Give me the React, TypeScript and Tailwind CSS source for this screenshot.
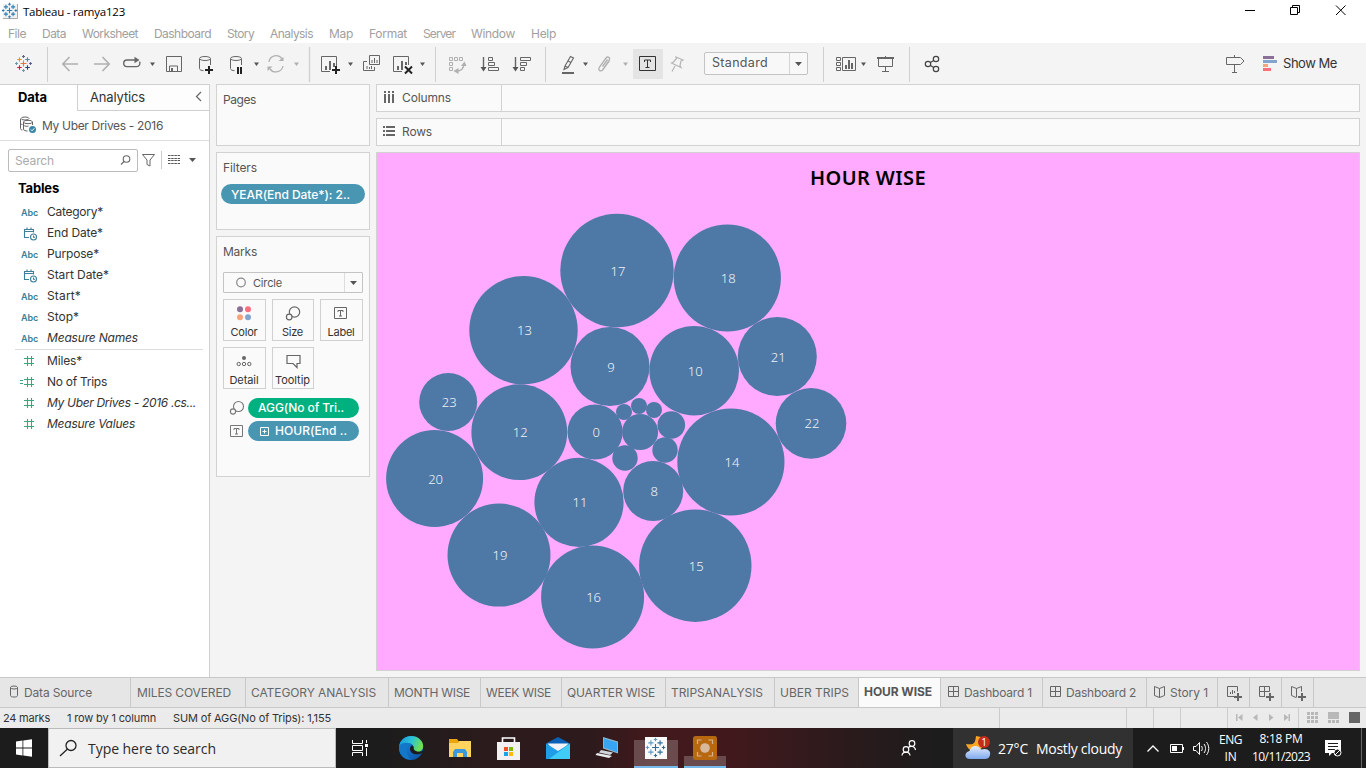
import React, { useLayoutEffect, useRef } from "react";
import clsx from "clsx";

/* Text run whose tracking is computed so that it fills a given width. */
function Fit({ w, className, children }: { w: number; className?: string; children: string }) {
  const ref = useRef<HTMLSpanElement>(null);
  useLayoutEffect(() => {
    const el = ref.current;
    if (!el) return;
    el.style.letterSpacing = "0px";
    const natural = el.getBoundingClientRect().width;
    el.style.letterSpacing = `${(w - natural) / children.length}px`;
  }, [w, children]);
  return (
    <span ref={ref} className={clsx("inline-block shrink-0 whitespace-pre", className)}>
      {children}
    </span>
  );
}

type IcProps = { x: number; y: number; w: number; h: number; c?: string; sw?: number; className?: string; children?: React.ReactNode };
/* Icon tile: the view box uses window coordinates. */
function Ic({ x, y, w, h, c = "#666", sw = 1, className, children }: IcProps) {
  return (
    <svg width={w} height={h} viewBox={`${x} ${y} ${w} ${h}`} fill="none" stroke={c} strokeWidth={sw} className={clsx("block shrink-0", className)}>
      {children}
    </svg>
  );
}
const Tool = ({ x, w, c, sw, children }: { x: number; w: number; c?: string; sw?: number; children?: React.ReactNode }) => (
  <Ic x={x} y={43} w={w} h={41} c={c} sw={sw}>
    {children}
  </Ic>
);
const Caret = ({ x, c = "#555" }: { x: number; c?: string }) => <path d={`M${x} 62.500h5l-2.500 3.500z`} fill={c} stroke="none" />;
const Sep = ({ x }: { x: number }) => <path d={`M${x}.5 47v35`} stroke="#cfcfcf" />;

const cross = (x: number, y: number, r: number, c: string, k: string | number) => (
  <path key={k} d={`M${x - r} ${y}h${2 * r}M${x} ${y - r}v${2 * r}`} stroke={c} />
);
function TableauMark({ cx, cy, s = 1, colors }: { cx: number; cy: number; s?: number; colors: string[] }) {
  const pts: [number, number, number][] = [
    [0, 0, 3], [-4, -4, 2.3], [4, -4, 2.3], [-4, 4, 2.3], [4, 4, 2.3], [0, -7, 1.5], [0, 7, 1.5], [-7, 0, 1.5], [7, 0, 1.5],
  ];
  return <g strokeWidth={1.1}>{pts.map(([dx, dy, r], i) => cross(cx + dx * s, cy + dy * s, r * s, colors[i % colors.length], i))}</g>;
}

const menus: [string, number, string][] = [
  ["File", 18, "ml-2"], ["Data", 24, "ml-4"], ["Worksheet", 56, "ml-4"], ["Dashboard", 57, "ml-4"], ["Story", 27, "ml-4"],
  ["Analysis", 43, "ml-4"], ["Map", 24, "ml-4"], ["Format", 38, "ml-4"], ["Server", 32, "ml-4"], ["Window", 44, "ml-4"], ["Help", 25, "ml-4"],
];

function TitleBar() {
  return (
    <div className="flex h-[23px] shrink-0 items-center bg-white">
      <Ic x={0} y={0} w={23} h={23} c="#3f86b0">
        <path d="M3 4h14v14H3z" fill="#f2f2f2" stroke="none" />
        <path d="M17.500 4v14.500H3" stroke="#aaa" />
        <TableauMark cx={9.5} cy={10.5} s={0.9} colors={["#2f7fb5"]} />
      </Ic>
      <Fit w={102} className="mt-px font-['Open_Sans',sans-serif] text-[11.500px] text-black">Tableau - ramya123</Fit>
      <Ic x={1230} y={0} w={136} h={23} c="#000" className="ml-auto">
        <path d="M1245 10.500h10" />
        <path d="M1290.500 7.500h7v7h-7zM1292.500 7.500v-2h7v7h-2" />
        <path d="M1336 5.500l9.500 9.500M1345.500 5.500L1336 15" />
      </Ic>
    </div>
  );
}

function MenuBar() {
  return (
    <div className="flex h-5 shrink-0 items-center bg-white pt-[2px] text-[12px] text-[#a0a0a0]">
      {menus.map(([t, w, m]) => (
        <Fit key={t} w={w} className={m}>{t}</Fit>
      ))}
    </div>
  );
}

function ToolBar() {
  return (
    <div className="flex h-[41px] shrink-0 items-center bg-[#f4f4f4]">
      <Tool x={0} w={56}>
        <TableauMark cx={23.5} cy={63.5} colors={["#e8762d", "#eb912c", "#5b879b", "#c72035", "#1f457e", "#5c6692", "#7199a6", "#7199a6", "#5c6692"]} />
        <Sep x={47} />
      </Tool>
      <Tool x={56} w={30} c="#b0b0b0" sw={1.6}><path d="M78 64H63M69.500 57L62.800 64l6.700 7" /></Tool>
      <Tool x={86} w={32} c="#b0b0b0" sw={1.6}><path d="M94 64h15M102.500 57l6.700 7-6.700 7" /></Tool>
      <Tool x={118} w={42} sw={1.4}>
        <path d="M135 60h-8a3.300 3.300 0 0 0 0 6.600h9.500a3.300 3.300 0 0 0 3-5" />
        <path d="M134.500 56.800l5 3.200-5 3.200z" fill="#666" stroke="none" />
        <Caret x={150} />
      </Tool>
      <Tool x={160} w={30}><path d="M166.500 56.500h15v15h-15zM169.500 71v-5h8v5" /><path d="M171 68h2v4h-2z" fill="#666" stroke="none" /></Tool>
      <Tool x={190} w={32}>
        <ellipse cx="205" cy="58.500" rx="5.500" ry="2" /><path d="M199.500 59v9.500c0 1.500 2 2 4 2.200M210.500 59v6" />
        <path d="M205 70h8M209 66v8" stroke="#222" strokeWidth={2} />
      </Tool>
      <Tool x={222} w={41}>
        <ellipse cx="236" cy="58.500" rx="5.500" ry="2" /><path d="M230.500 59v9.500c0 1.500 2 2 4 2.200M241.500 59v6" />
        <path d="M238 67v7M241 67v7" stroke="#222" strokeWidth={2} /><Caret x={254} />
      </Tool>
      <Tool x={263} w={50} c="#b0b0b0" sw={1.3}>
        <path d="M269 62a7.300 7.300 0 0 1 13-3.500M283 66a7.300 7.300 0 0 1-13 3" /><path d="M283.500 57v4h-5zM267.500 71v-4.500h5z" fill="#b0b0b0" stroke="none" />
        <Caret x={294} c="#b0b0b0" /><Sep x={309} />
      </Tool>
      <Tool x={313} w={44}>
        <path d="M330 71.500h-8.500v-15h15V66" /><path d="M326 66v4M330 61v9M334 63v4" strokeWidth={2} />
        <path d="M332 70h8M336 66v8" stroke="#222" strokeWidth={2} /><Caret x={348} />
      </Tool>
      <Tool x={357} w={30}>
        <path d="M369.500 55.500h10v9h-10zM367 61.500h-3.500v9h11v-3.500" /><path d="M372 60v3M374.500 58v5M377 60v3M367 66v3M369.500 67v2M371.500 66v3" />
      </Tool>
      <Tool x={387} w={54}>
        <path d="M402 71.500h-8.500v-15h15V65" /><path d="M398 66v4M402 61v9M406 62v3" strokeWidth={2} />
        <path d="M405 66.500l7 7M412 66.500l-7 7" stroke="#222" strokeWidth={2} /><Caret x={420} /><Sep x={435} />
      </Tool>
      <Tool x={441} w={33} c="#b0b0b0">
        <path d="M449.500 57.500h3v3h-3zM454.500 57.500h3v3h-3zM459.500 57.500h3v3h-3zM449.500 62.500h3v3h-3zM449.500 67.500h3v3h-3z" /><path d="M464 63.500c0 5-3 7.500-8 7.500" strokeWidth={1.3} />
        <path d="M461 66l3.500-4.500 2 4.500zM458.500 68v6l-5-3z" fill="#b0b0b0" stroke="none" />
      </Tool>
      <Tool x={474} w={32}>
        <path d="M483.500 57v12" strokeWidth={1.4} /><path d="M480.500 67h6l-3 4.500z" fill="#555" stroke="none" />
        <path d="M488.500 57.500h4v3h-4zM488.500 62.500h6v3h-6zM488.500 67.500h10v3h-10z" />
      </Tool>
      <Tool x={506} w={46}>
        <path d="M515.500 57v12" strokeWidth={1.4} /><path d="M512.500 67h6l-3 4.500z" fill="#555" stroke="none" />
        <path d="M520.500 57.500h10v3h-10zM520.500 62.500h6v3h-6zM520.500 67.500h4v3h-4z" /><Sep x={545} />
      </Tool>
      <Tool x={552} w={40}>
        <path d="M565 66l5.500-9.500 3 1.500-5.500 9.500-4 2zM565 66l3 1.500M568 61l3 1.500" strokeWidth={1.1} /><path d="M562 73h12" strokeWidth={2} /><Caret x={583} />
      </Tool>
      <Tool x={592} w={41} c="#b0b0b0" sw={1.3}>
        <path d="M602 70.500l7-10c1.800-3-1.200-4.500-3-2.500l-6.500 9c-2.200 4 1.500 5 3.500 2.500l6.500-9M602.500 66.500l5-7" /><Caret x={623} c="#b0b0b0" />
      </Tool>
      <div className="flex h-[30px] w-[30px] bg-[#e4e4e4]">
        <Ic x={633} y={49} w={30} h={30} c="#333"><path d="M639.500 56.500h16v14h-16zM644.500 62v-2h6v2M647.500 60v7.500M645.500 67.500h4" /></Ic>
      </div>
      <Tool x={663} w={41} c="#b5b5b5" sw={1.2}><path d="M676 57l7 3-2 1-1 4.500 1 2-9.500-4.500 2-1 3-3.500zM675 66l-3 5.500" /></Tool>
      <div className="flex h-[23px] w-[104px] items-center rounded-[2px] border border-[#c4c4c4] bg-[#f8f8f8] pl-[7px] text-[12.500px] text-[#555]">
        <Fit w={56}>Standard</Fit>
        <Ic x={789} y={53} w={18} h={21} className="ml-auto"><path d="M789.500 53v21" stroke="#d4d4d4" /><path d="M795 62h7l-3.500 4z" fill="#555" stroke="none" /></Ic>
      </div>
      <Tool x={808} w={64}>
        <Sep x={823} />
        <path d="M836.500 57.500h4v3h-4zM836.500 62.500h4v3h-4zM836.500 67.500h4v3h-4zM842.500 57.500h13v13h-13z" /><path d="M846 65v4M849 60v9M852 63v6" strokeWidth={2} /><Caret x={861} />
      </Tool>
      <Tool x={872} w={42}>
        <path d="M877 58h17" strokeWidth={2} /><path d="M878.500 58v8.500h14V58M885.500 56v2M885.500 67v4M882 71.500h7" /><Sep x={909} />
      </Tool>
      <Tool x={914} w={40} c="#444" sw={1.2}><circle cx="928" cy="64" r="2.700" /><circle cx="936" cy="59" r="2.700" /><circle cx="936" cy="69" r="2.700" /><path d="M930.500 62.500l3.200-2M930.500 65.500l3.200 2" /></Tool>
      <div className="flex-1" />
      <Tool x={1216} w={38}><path d="M1226.500 57.500h14l3.500 3.500-3.500 3.500h-14zM1234.500 55v2M1234.500 65v7M1232 72.500h5" /></Tool>
      <Tool x={1254} w={29}>
        <g stroke="none"><path d="M1263 56h11v3h-11z" fill="#8a6f96" /><path d="M1263 60h14v3h-14z" fill="#83a5cd" /><path d="M1263 64h5v3h-5z" fill="#f6a47c" /><path d="M1263 68h8v3h-8z" fill="#fa6f80" /></g>
      </Tool>
      <Fit w={54} className="mr-[29px] text-[13px] text-[#333]">Show Me</Fit>
    </div>
  );
}

type Field = { k: "abc" | "date" | "num" | "calc"; t: string; w: number; i?: boolean };
const dims: Field[] = [
  { k: "abc", t: "Category*", w: 56 }, { k: "date", t: "End Date*", w: 56 }, { k: "abc", t: "Purpose*", w: 52 }, { k: "date", t: "Start Date*", w: 62 },
  { k: "abc", t: "Start*", w: 34 }, { k: "abc", t: "Stop*", w: 32 }, { k: "abc", t: "Measure Names", w: 91, i: true },
];
const meas: Field[] = [
  { k: "num", t: "Miles*", w: 35 }, { k: "calc", t: "No of Trips", w: 60 }, { k: "num", t: "My Uber Drives - 2016 .cs...", w: 149, i: true }, { k: "num", t: "Measure Values", w: 88, i: true },
];
function FieldRow({ f }: { f: Field }) {
  return (
    <div className="flex h-[21px] items-center text-[12px] text-[#333]">
      <div className="flex h-full w-[47px] items-center">
        {f.k === "abc" && <Fit w={17} className="ml-[21px] mt-[2px] text-[9px] font-semibold text-[#3b7f99]">Abc</Fit>}
        {f.k === "date" && (
          <Ic x={0} y={222} w={47} h={21} c="#3b7f99" sw={1.1}>
            <path d="M29 237.500h-4.500v-8h9v3M24.500 231.500h9M27 227.500v2M31 227.500v2" /><circle cx="33.500" cy="237" r="3" /><path d="M33.500 235.500v1.700h1.500" />
          </Ic>
        )}
        {(f.k === "num" || f.k === "calc") && (
          <Ic x={0} y={0} w={47} h={21} c="#3ba57c" sw={1.1}>
            <path d="M24 8.500h10M24 13.500h10M27.500 6v10M31.500 6v10" />{f.k === "calc" && <path d="M20 9.500h3M20 12.500h3" />}
          </Ic>
        )}
      </div>
      <Fit w={f.w} className={f.i ? "italic" : ""}>{f.t}</Fit>
    </div>
  );
}

function DataPane() {
  return (
    <div className="flex w-[210px] shrink-0 flex-col border-r border-t border-[#d0d0d0] bg-white">
      <div className="flex h-[26px] items-stretch text-[13px] text-[#333]">
        <div className="flex w-[77px] items-center pl-[18px]"><Fit w={29} className="font-bold text-black">Data</Fit></div>
        <div className="flex flex-1 items-center border-b border-l border-[#d0d0d0] bg-[#fdfdfd] pl-3">
          <Fit w={55}>Analytics</Fit>
          <Ic x={190} y={86} w={19} h={24} className="ml-auto" sw={1.2}><path d="M201 92l-4.500 4.500 4.500 4.500" /></Ic>
        </div>
      </div>
      <div className="flex h-[30px] items-center border-b border-[#ddd] text-[12px] text-[#555]">
        <Ic x={0} y={111} w={42} h={29}>
          <ellipse cx="25" cy="118.500" rx="4" ry="1.500" /><path d="M20.500 119v9.500c0 1 1 1.500 2 1.500M20.500 123c0 1 1 1.500 2 1.500" /><path d="M23.500 122v7c0 1.500 2 2 4 2M23.500 122v3c1 1.500 4 1.500 5 1M32.500 122v3" /><ellipse cx="28" cy="122" rx="4.500" ry="1.700" />
          <circle cx="32.500" cy="129.500" r="3.500" fill="#3b86a5" stroke="none" /><path d="M30.800 129.500l1.300 1.300 2.200-2.500" stroke="#fff" />
        </Ic>
        <Fit w={121}>My Uber Drives - 2016</Fit>
      </div>
      <div className="mt-2 flex h-[23px] items-center pl-2">
        <div className="flex h-[23px] w-[130px] items-center rounded-[2px] border border-[#bbb] pl-[6px] text-[12px] text-[#aaa]">
          <Fit w={39}>Search</Fit>
          <Ic x={118} y={150} w={19} h={21} className="ml-auto" sw={1.1}><circle cx="126.500" cy="159" r="3.300" /><path d="M124 161.500l-3 3" /></Ic>
        </div>
        <Ic x={138} y={149} w={71} h={23}>
          <path d="M142.500 154.500h12l-4.500 5.500v6l-3-1.500V160z" /><path d="M161.500 151v18" stroke="#ccc" />
          <path d="M168 155.500h12M168 158.500h12M168 160.500h12M168 163.500h12" stroke="#555" strokeDasharray="2.500 0.700" />
          <path d="M189 158h7l-3.500 4z" fill="#555" stroke="none" />
        </Ic>
      </div>
      <div className="flex h-[29px] items-center pl-[18px] pt-[5px] text-[13px]"><Fit w={41} className="font-bold text-black">Tables</Fit></div>
      {dims.map((f) => <FieldRow key={f.t} f={f} />)}
      <div className="ml-[15px] mr-[6px] mt-px h-px bg-[#ddd]" />
      {meas.map((f) => <FieldRow key={f.t} f={f} />)}
    </div>
  );
}

const T = ({ x, y }: { x: number; y: number }) => <path d={`M${x} ${y}h12v11h-12zM${x + 3.5} ${y + 4.5}v-1.500h5v1.500M${x + 6} ${y + 3}v5.500M${x + 4.5} ${y + 8.5}h3`} />;

function MarkButton({ label, w, children }: { label: string; w: number; children: React.ReactNode }) {
  return (
    <div className="flex h-[42px] flex-col items-center border border-[#d0d0d0] pr-px text-[11px] text-[#333]">
      <svg width={40} height={25} viewBox="0 0 40 25" fill="none" stroke="#666" className="shrink-0">{children}</svg>
      <Fit w={w} className="leading-[14px]">{label}</Fit>
    </div>
  );
}

function Cards() {
  return (
    <div className="ml-1.5 flex w-[154px] shrink-0 flex-col gap-1.5 text-[12px] text-[#555]">
      <div className="h-[62px] border border-[#d2d2d2] bg-[#fafafa] pl-1.5 pt-[7px] leading-4"><Fit w={33}>Pages</Fit></div>
      <div className="h-[78px] border border-[#d2d2d2] bg-[#fafafa] px-1 pt-[7px] leading-4">
        <Fit w={34} className="ml-0.5">Filters</Fit>
        <div className="mt-[8px] flex h-5 items-center rounded-full bg-[#4996b2] pl-[10px] pt-px text-white"><Fit w={119} className="font-medium">YEAR(End Date*): 2..</Fit></div>
      </div>
      <div className="h-[241px] border border-[#d2d2d2] bg-[#fafafa] px-1.5 pt-[7px] leading-4">
        <Fit w={34} className="block w-fit">Marks</Fit>
        <div className="mt-[12px] flex h-[21px] items-center rounded-[1px] border border-[#c4c4c4] text-[11px]">
          <Ic x={224} y={273} w={29} h={19} c="#888" sw={1.2}><circle cx="241" cy="282.500" r="4.300" /></Ic>
          <Fit w={29}>Circle</Fit>
          <Ic x={344} y={273} w={18} h={19} className="ml-auto"><path d="M344.500 273v19" stroke="#ddd" /><path d="M350 281h7l-3.500 4z" fill="#555" stroke="none" /></Ic>
        </div>
        <div className="mt-1.5 grid grid-cols-[43px_42px_43px] gap-1.5">
          <MarkButton label="Color" w={27}>
            <g stroke="none"><circle cx="16" cy="9.300" r="3" fill="#8a6f96" /><circle cx="24" cy="9.300" r="3" fill="#fa6f80" /><circle cx="16" cy="17.300" r="3" fill="#f6a47c" /><circle cx="24" cy="17.300" r="3" fill="#83a5cd" /></g>
          </MarkButton>
          <MarkButton label="Size" w={21}><g strokeWidth="1.200"><circle cx="21.500" cy="12" r="5.200" /><circle cx="16.200" cy="17" r="2.800" fill="#fafafa" /></g></MarkButton>
          <MarkButton label="Label" w={27}><T x={13.5} y={7.5} /></MarkButton>
          <MarkButton label="Detail" w={29}>
            <circle cx="20" cy="10" r="2" fill="#666" stroke="none" /><circle cx="14.700" cy="16" r="1.700" /><circle cx="20" cy="16" r="1.700" /><circle cx="25.300" cy="16" r="1.700" />
          </MarkButton>
          <MarkButton label="Tooltip" w={35}><path d="M14 7.500h13v8h-3v4l-4-4h-6z" strokeWidth="1.200" /></MarkButton>
        </div>
        <div className="mt-[9px] flex items-center">
          <Ic x={223} y={398} w={25} h={20} c="#777" sw={1.1}><circle cx="238.500" cy="406.500" r="5" /><circle cx="233" cy="411.500" r="2.600" fill="#fafafa" /></Ic>
          <div className="flex h-5 w-[111px] items-center rounded-full bg-[#00b180] pl-[10px] text-white"><Fit w={86} className="font-medium">AGG(No of Tri..</Fit></div>
        </div>
        <div className="mt-[3px] flex items-center">
          <Ic x={223} y={421} w={25} h={20} c="#777"><T x={230.5} y={425.5} /></Ic>
          <div className="flex h-5 w-[111px] items-center rounded-full bg-[#4996b2] text-white">
            <Ic x={248} y={421} w={27} h={20} c="#fff"><path d="M260.500 427.500h8v8h-8zM262.500 431.500h4M264.500 429.500v4" /></Ic>
            <Fit w={72} className="font-medium">HOUR(End ..</Fit>
          </div>
        </div>
      </div>
    </div>
  );
}

const bubbles: [number, number, number, string?][] = [
  [617, 270.5, 56.7, "17"], [727.3, 278, 53.6, "18"], [523.5, 330.2, 54.2, "13"], [610, 366.6, 39.5, "9"], [694.2, 370.7, 44.8, "10"],
  [777.3, 356.5, 39.5, "21"], [811, 423.4, 35.3, "22"], [448.2, 402, 29, "23"], [519.3, 432.2, 47.9, "12"], [595.1, 432, 27.6, "0"],
  [730.9, 462, 53.6, "14"], [434.6, 478.5, 48.5, "20"], [579, 502.4, 44.6, "11"], [653.2, 491, 30, "8"], [499, 555.1, 51.5, "19"],
  [592.6, 597, 51.5, "16"], [695.3, 565.7, 56.2, "15"], [640.1, 432, 18], [624, 412, 8], [639, 406, 8], [654, 410, 8],
  [671.3, 425, 13.8], [665, 450, 12.7], [625, 458, 12.7],
];

function Sheet() {
  return (
    <div className="ml-1.5 mr-1.5 flex flex-1 flex-col gap-1.5 text-[12px] text-[#555]">
      <div className="flex h-[28px] border border-[#d2d2d2] bg-[#fafafa]">
        <div className="flex w-[125px] items-center border-r border-[#d2d2d2]">
          <Ic x={377} y={85} w={25} h={26} sw={2}><path d="M385 91v2M389 91v2M393 91v2M385 94v9M389 94v9M393 94v9" /></Ic>
          <Fit w={49}>Columns</Fit>
        </div>
      </div>
      <div className="flex h-[28px] border border-[#d2d2d2] bg-[#fafafa]">
        <div className="flex w-[125px] items-center border-r border-[#d2d2d2]">
          <Ic x={377} y={119} w={25} h={26} sw={2}><path d="M383 127h2M383 131h2M383 135h2M386 127h9M386 131h9M386 135h9" /></Ic>
          <Fit w={30}>Rows</Fit>
        </div>
      </div>
      <div className="flex h-[519px] flex-col border border-[#d2d2d2] bg-[#ffaaff]">
        <div className="flex h-[50px] items-center justify-center"><Fit w={116} className="font-['Noto_Sans',sans-serif] text-[20px] font-semibold text-black">HOUR WISE</Fit></div>
        <svg width={490} height={460} viewBox="377 203 490 460" className="block font-['Noto_Sans',sans-serif] text-[13px] font-light">
          {bubbles.map(([x, y, r, t], i) => (
            <g key={i}>
              <circle cx={x} cy={y} r={r} fill="#4e79a7" />
              {t && <text x={x + 1} y={y + 5} textAnchor="middle" fill="#f0f4f8">{t}</text>}
            </g>
          ))}
        </svg>
      </div>
    </div>
  );
}

function SheetTabs() {
  const tab = "flex shrink-0 items-center border-r border-[#c8c8c8]";
  const grid = (x: number) => <path d={`M${x} 686.500h10v10h-10zM${x} 691.500h10M${x + 5} 686.500v10`} />;
  const book = (x: number) => <path d={`M${x} 686.500l5 2 5-2v9l-5 2-5-2zM${x + 5} 688.500v9`} />;
  const plus = (x: number) => <path d={`M${x - 4} 697h8M${x} 693v8`} strokeWidth={2} />;
  return (
    <div className="flex h-[31px] shrink-0 border-y border-[#c8c8c8] bg-[#e6e6e6] text-[12px] text-[#666]">
      <div className={clsx(tab, "w-[131px]")}>
        <Ic x={0} y={678} w={24} h={29}><path d="M10.500 687.500v8c0 1 1 1.500 3.500 1.500s3.500-.5 3.500-1.500v-8" /><ellipse cx="14" cy="687.500" rx="3.500" ry="1.500" /></Ic>
        <Fit w={68}>Data Source</Fit>
      </div>
      <div className={clsx(tab, "w-[115px] pl-1.5")}><Fit w={94}>MILES COVERED</Fit></div>
      <div className={clsx(tab, "w-[143px] pl-[5px]")}><Fit w={125}>CATEGORY ANALYSIS</Fit></div>
      <div className={clsx(tab, "w-[92px] pl-[5px]")}><Fit w={76}>MONTH WISE</Fit></div>
      <div className={clsx(tab, "w-[81px] pl-[5px]")}><Fit w={65}>WEEK WISE</Fit></div>
      <div className={clsx(tab, "w-[104px] pl-[5px]")}><Fit w={88}>QUARTER WISE</Fit></div>
      <div className={clsx(tab, "w-[109px] pl-[5px]")}><Fit w={92}>TRIPSANALYSIS</Fit></div>
      <div className={clsx(tab, "w-[84px] pl-[5px]")}><Fit w={69}>UBER TRIPS</Fit></div>
      <div className={clsx(tab, "w-[82px] bg-[#fafafa] pb-0.5 pl-[5px] text-[#555]")}><Fit w={68} className="font-bold">HOUR WISE</Fit></div>
      <div className={clsx(tab, "w-[102px]")}><Ic x={941} y={678} w={23} h={29}>{grid(948.5)}</Ic><Fit w={68}>Dashboard 1</Fit></div>
      <div className={clsx(tab, "w-[104px]")}><Ic x={1043} y={678} w={23} h={29}>{grid(1050.5)}</Ic><Fit w={70}>Dashboard 2</Fit></div>
      <div className={clsx(tab, "w-[71px]")}><Ic x={1147} y={678} w={23} h={29}>{book(1154.5)}</Ic><Fit w={38}>Story 1</Fit></div>
      <div className={clsx(tab, "w-[32px]")}><Ic x={1218} y={678} w={31} h={29}><path d="M1234 696.500h-6.500v-10h10v5M1230.500 692v2M1232.500 690v4M1234.500 691v2" />{plus(1238)}</Ic></div>
      <div className={clsx(tab, "w-[32px]")}><Ic x={1250} y={678} w={31} h={29}><path d="M1265 696.500h-5.500v-10h10v5M1259.500 691.500h10M1264.500 686.500v10" />{plus(1270)}</Ic></div>
      <div className={clsx(tab, "w-[32px]")}><Ic x={1282} y={678} w={31} h={29}><path d="M1296 697.500l-4.500-2v-9l5 2 5-2v5M1296.500 688.500v9" />{plus(1302)}</Ic></div>
    </div>
  );
}

function StatusBar() {
  return (
    <div className="flex h-5 shrink-0 items-center bg-[#ebebeb] pl-[3px] text-[11px] text-[#333]">
      <Fit w={47}>24 marks</Fit>
      <Fit w={89} className="ml-[17px]">1 row by 1 column</Fit>
      <Fit w={158} className="ml-[17px]">SUM of AGG(No of Trips): 1,155</Fit>
      <Ic x={990} y={708} w={376} h={20} c="#ccc" className="ml-auto">
        <path d="M999.500 708v20M1126.500 708v20M1153.500 708v20M1180.500 708v20M1227.500 708v20M1298.500 708v20" />
        <g fill="#b8b8b8" stroke="none">
          <path d="M1236 714h1.500v7h-1.500zM1242.500 714v7l-4.500-3.500zM1257.500 714v7l-4.500-3.500zM1269 714v7l4.500-3.500zM1284 714v7l4.500-3.500zM1288.500 714h1.500v7h-1.500z" />
          <path d="M1307 712h3v3h-3zM1311 712h3v3h-3zM1315 712h3v3h-3zM1307 716h3v3h-3zM1311 716h3v3h-3zM1315 716h3v3h-3zM1307 720h3v3h-3zM1311 720h3v3h-3zM1315 720h3v3h-3z" />
          <path d="M1328 712h11v7h-11zM1328 720h3v3h-3zM1332 720h3v3h-3zM1336 720h3v3h-3z" />
          <path d="M1349 712h11v11h-11z" fill="#666" />
        </g>
      </Ic>
    </div>
  );
}

const Bar = ({ x, w, children }: { x: number; w: number; children?: React.ReactNode }) => <Ic x={x} y={728} w={w} h={40} c="#fff">{children}</Ic>;

function TaskBar() {
  return (
    <div className="flex h-10 shrink-0 items-center bg-[#1c1c1c] bg-[linear-gradient(90deg,transparent_0,transparent_380px,#2c1b1c_490px,#2c1a1c_590px,#43191c_650px,#40191c_740px,#2c1a1c_840px,transparent_940px)] font-['Open_Sans',sans-serif] text-white">
      <Bar x={0} w={48}><path d="M16 741.600l6.500-1v7H16zM23.300 740.500l8.700-1.200v8.300h-8.700zM16 748.500h6.500v7l-6.500-1zM23.300 748.500h8.700v8.200l-8.700-1.200z" fill="#fff" stroke="none" /></Bar>
      <div className="flex h-10 w-72 items-center border border-[#bbb] bg-[#f1f1f1] text-[14px] text-[#2b2b2b]">
        <Ic x={49} y={729} w={39} h={38} c="#222" sw={1.3}><circle cx="71" cy="745.500" r="5" /><path d="M67.500 749L60 756" /></Ic>
        <Fit w={128}>Type here to search</Fit>
      </div>
      <Bar x={336} w={50}><path d="M352.500 740v3.500h10V740M352.500 745.500h10v5h-10zM352.500 756v-3.500h10v3.500M366.500 740v3M366.500 748v8" /><path d="M365 744h3v3h-3z" fill="#fff" stroke="none" /></Bar>
      <Bar x={386} w={49}>
        <defs>
          <linearGradient id="edgeA" x1="0" y1="0" x2="1" y2="0.300"><stop offset="0" stopColor="#1595dc" /><stop offset=".55" stopColor="#2cc3d6" /><stop offset="1" stopColor="#6de052" /></linearGradient>
          <linearGradient id="edgeB" x1="0" y1="0" x2="1" y2="1"><stop offset="0" stopColor="#1a8fe0" /><stop offset="1" stopColor="#0b4fa5" /></linearGradient>
        </defs>
        <g stroke="none">
          <circle cx="411" cy="748" r="12" fill="url(#edgeB)" />
          <path d="M399.200 746c1-6 6-10 12-10 7 0 12 5 12 10 0 4-3 6-6.500 6-3 0-4.500-1-4-2.500 1.500-2 1-6-4-6.500-4-.3-8 1-9.500 3z" fill="url(#edgeA)" />
          <path d="M411.500 745.500c-2.500 2-2 7 2.500 8.500 3 .8 6 .3 9-1.500l.5-2c-3 2-8.500 1.500-9.700-1.500 0-1 .2-3.500-2.300-3.500z" fill="#1c1c1c" />
          <path d="M399 746c2.500-3.500 9-4 11-2-5 3-4.500 11 1 15.500-7 .5-12.500-5-12-13.500z" fill="#1378ca" />
        </g>
      </Bar>
      <Bar x={435} w={49}><g stroke="none"><path d="M449 739h8l1.500 2H470v4h-21z" fill="#e8a50c" /><path d="M449 743h9l1.500-2H471v16h-22z" fill="#ffd45e" /><path d="M453 757v-5l2-3h10l2 3v5h-4v-4h-6v4z" fill="#3c98dc" /></g></Bar>
      <Bar x={484} w={49}><path d="M502.500 744v-6h12v6" strokeWidth={1.6} /><g stroke="none"><path d="M497 742h23v18h-23z" fill="#f1f1f1" /><path d="M504 747h4v4h-4z" fill="#f0502a" /><path d="M509 747h4v4h-4z" fill="#7fba00" /><path d="M504 752h4v4h-4z" fill="#18a3ee" /><path d="M509 752h4v4h-4z" fill="#fdb813" /></g></Bar>
      <Bar x={533} w={49}><g stroke="none"><path d="M546 743.500l12-6.500 12 6.500V759h-24z" fill="#0b61b5" /><path d="M547.500 743.500h21l-7 8h-7z" fill="#f0f4f8" /><path d="M546 743.500l12 7.500 12-7.500V759h-24z" fill="#1f9de8" /><path d="M570 743.500V759h-21z" fill="#3fcdf7" /></g></Bar>
      <Bar x={582} w={52}><g stroke="none"><path d="M603 737l15 4.500v12l-15-5z" fill="#8fb3cc" /><path d="M604 738.500l13 4v9.500l-13-4.500z" fill="#36a6f4" /><path d="M601 750l12 2.500-3 2.500-11-2.500z" fill="#cfd6dc" /><path d="M597 753l13 2.500 2 .5-3 2-13.500-3z" fill="#e8edf0" /></g></Bar>
      <Bar x={634} w={50}>
        <g stroke="none"><path d="M634 740h44v26h-44z" fill="#fff" opacity=".22" /><path d="M634 766h44v2h-44z" fill="#76b9ed" /><path d="M645 737h22v22h-22z" fill="#fafafa" /></g>
        <TableauMark cx={655.5} cy={747.5} s={1.15} colors={["#2c6f9e", "#5e9bc2"]} />
      </Bar>
      <Bar x={684} w={42}>
        <g stroke="none"><path d="M684 756h42v10h-42z" fill="#fff" opacity=".22" /><path d="M684 766h42v2h-42z" fill="#76b9ed" /><rect x="693" y="736" width="24" height="24" rx="2.500" fill="#b8680f" /><circle cx="705" cy="748" r="4.800" fill="#d9b79a" /></g>
        <path d="M697.500 744v-4h4M708.500 740h4v4M712.500 752v4h-4M701.500 756h-4v-4" stroke="#d9b08a" strokeWidth={1.2} />
      </Bar>
      <div className="flex-1" />
      <Bar x={893} w={60}><g strokeWidth="1.200"><circle cx="912" cy="743.500" r="2.800" /><circle cx="906" cy="749.500" r="2.800" /><path d="M902 755.500c.5-4.500 7.500-4.500 8 0M908.500 747.500c2-2 6.500-1.500 7 2.500" /></g></Bar>
      <div className="flex h-10 w-[180px] items-center bg-[#313131] text-[14px]">
        <Ic x={953} y={728} w={45} h={40}>
          <defs><linearGradient id="cloud" x1="0" y1="0" x2="0" y2="1"><stop offset="0" stopColor="#e6effc" /><stop offset="1" stopColor="#7fa9ee" /></linearGradient></defs>
          <g stroke="none"><path d="M976 736c-1 8-2 9-10 8 2 6 7 9 12 7s7-8 3-14z" fill="#f5a623" /><path d="M970 759c-6 0-6-7-.5-8 1-6 9-7 11.500-1.500 7-2 10 2 9 5.500-.5 3-3 4-5 4z" fill="url(#cloud)" /><circle cx="984" cy="742" r="6" fill="#c42b1c" /></g>
          <text x="984" y="746" textAnchor="middle" fontSize="10" fill="#fff" stroke="none">1</text>
        </Ic>
        <Fit w={30}>27°C</Fit><Fit w={86} className="ml-2">Mostly cloudy</Fit>
      </div>
      <Bar x={1133} w={34}><path d="M1147.500 751.500l5.500-5.500 5.500 5.500" strokeWidth={1.3} /></Bar>
      <Bar x={1167} w={22}><path d="M1170.500 744.500h12v8h-12zM1183.500 747v3" /><path d="M1172 746h5v5h-5z" fill="#fff" stroke="none" /></Bar>
      <Bar x={1189} w={26}><path d="M1193.500 746.500h2.500l3.500-4v12l-3.500-4h-2.500zM1201.500 746c1 1.500 1 3.500 0 5M1204 744c2 2.500 2 6.500 0 9M1206.500 742c3 4 3 9 0 13" /></Bar>
      <div className="flex w-[31px] flex-col items-center text-[12px] leading-[17px]"><Fit w={23}>ENG</Fit><Fit w={12}>IN</Fit></div>
      <div className="ml-[5px] flex w-[60px] flex-col items-center text-[12px] leading-[18px]"><Fit w={43}>8:18 PM</Fit><Fit w={58}>10/11/2023</Fit></div>
      <Bar x={1311} w={55}>
        <path d="M1325 740h16v13h-9l-3 3v-3h-4z" fill="#fff" stroke="none" /><path d="M1328 743.500h10M1328 746.500h10M1328 749.500h7" stroke="#1c1c1c" /><circle cx="1337.500" cy="752.500" r="3.500" fill="#1c1c1c" /><path d="M1335 755l5-5" />
        <path d="M1361.500 728v40" stroke="#666" />
      </Bar>
    </div>
  );
}

export default function App() {
  return (
    <div className="flex h-[768px] w-[1366px] flex-col overflow-hidden bg-[#f4f4f4] font-['Inter',sans-serif]">
      <TitleBar />
      <MenuBar />
      <ToolBar />
      <div className="flex h-[593px] shrink-0">
        <DataPane />
        <Cards />
        <Sheet />
      </div>
      <SheetTabs />
      <StatusBar />
      <TaskBar />
    </div>
  );
}
